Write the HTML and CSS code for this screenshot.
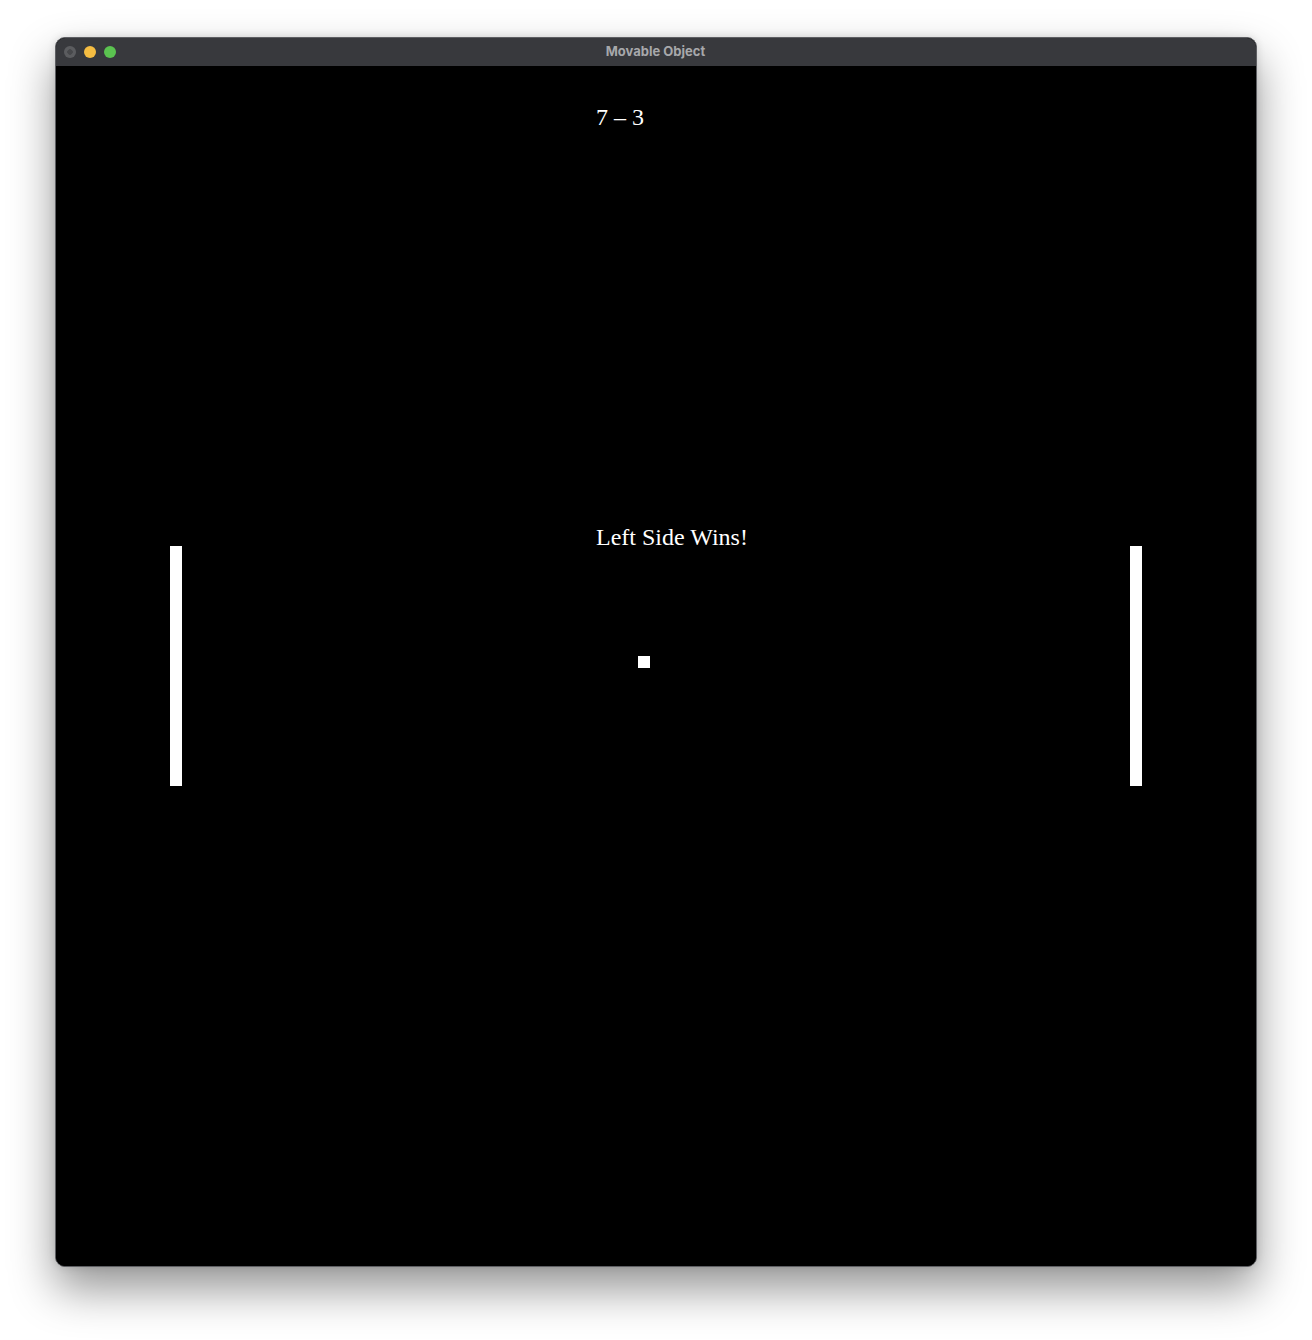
FILE: index.html
```html
<!DOCTYPE html>
<html lang="en">
<head>
<meta charset="utf-8">
<title>Movable Object</title>
<link rel="stylesheet" href="styles.css">
</head>
<body>
<div class="window">
  <div class="titlebar">
    <div class="lights">
      <span class="light light-close"></span>
      <span class="light light-min"></span>
      <span class="light light-max"></span>
    </div>
    <div class="title">Movable Object</div>
  </div>
  <div class="canvas">
    <div class="score">7 – 3</div>
    <div class="message">Left Side Wins!</div>
    <div class="paddle paddle-left"></div>
    <div class="paddle paddle-right"></div>
    <div class="ball"></div>
  </div>
</div>
</body>
</html>
```
FILE: styles.css
```css
html, body {
  margin: 0;
  padding: 0;
  background: #ffffff;
}
body {
  width: 1312px;
  height: 1340px;
  overflow: hidden;
}
.window {
  margin: 37px 0 0 55px;
  width: 1200px;
  border: 1px solid #5e5f63;
  border-radius: 10px;
  overflow: hidden;
  background: #000;
  box-shadow: 0 22px 45px rgba(0, 0, 0, 0.42), 0 0 8px rgba(0, 0, 0, 0.12);
}
.titlebar {
  position: relative;
  height: 28px;
  background: #38393d;
  display: flex;
  align-items: center;
  justify-content: center;
}
.lights {
  position: absolute;
  left: 8px;
  top: 8px;
  display: flex;
  gap: 8px;
}
.light {
  width: 12px;
  height: 12px;
  border-radius: 50%;
  display: block;
  box-sizing: border-box;
}
.light-close {
  background: radial-gradient(circle, #47484b 0 2.5px, #5b5c5f 3px);
}
.light-min {
  background: #f5bd42;
}
.light-max {
  background: #5bc350;
}
.title {
  font-family: Inter, "Liberation Sans", sans-serif;
  font-weight: 700;
  font-size: 13px;
  color: #a7a8ab;
  line-height: 26px;
  padding-bottom: 2px;
  padding-right: 1px;
}
.canvas {
  position: relative;
  height: 1200px;
  background: #000;
  font-family: "Liberation Serif", "Times New Roman", serif;
  color: #fff;
}
.score, .message {
  position: absolute;
  left: 540px;
  font-size: 24px;
  line-height: 24px;
  white-space: nowrap;
}
.score { top: 39px; }
.message { top: 459px; }
.paddle {
  position: absolute;
  top: 480px;
  width: 12px;
  height: 240px;
  background: #fff;
}
.paddle-left { left: 114px; }
.paddle-right { left: 1074px; }
.ball {
  position: absolute;
  left: 582px;
  top: 590px;
  width: 12px;
  height: 12px;
  background: #fff;
}
```
